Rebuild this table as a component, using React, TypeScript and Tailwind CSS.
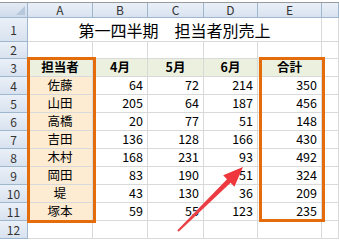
import React from "react";

const rows: [string, number, number, number, number][] = [
  ["佐藤", 64, 72, 214, 350],
  ["山田", 205, 64, 187, 456],
  ["高橋", 20, 77, 51, 148],
  ["吉田", 136, 128, 166, 430],
  ["木村", 168, 231, 93, 492],
  ["岡田", 83, 190, 51, 324],
  ["堤", 43, 130, 36, 209],
  ["塚本", 59, 55, 123, 235],
];

const font = { fontFamily: '"Noto Sans CJK JP", "Liberation Sans", sans-serif' };

const hdr =
  "flex items-center justify-center border-r border-b border-[#9eb6ce] bg-gradient-to-b from-[#eaf0f8] to-[#d8e2ef] text-[12px] text-[#333] leading-none";
const cell = "border-r border-b border-[#d9d9d9] flex items-center text-[12.5px] text-black leading-none";

export default function App() {
  return (
    <div className="w-[339px] h-[240px] overflow-hidden bg-white relative" style={font}>
      <div className="h-[3px] border-b border-[#9a9a9a] bg-white" />
      <div className="grid grid-cols-[28px_65px_55px_56px_54px_64px_17px] grid-rows-[15px_24px_17px_18px_18px_18px_18px_18px_18px_18px_18px_18px_18px]">
        {/* header row */}
        <div className="relative border-r border-b border-[#9eb6ce] bg-gradient-to-b from-[#e4ebf5] to-[#cfdaea]">
          <div className="absolute right-[2px] bottom-[2px] w-0 h-0 border-l-[9px] border-l-transparent border-b-[9px] border-b-[#b8c8dc]" />
        </div>
        {["A", "B", "C", "D", "E", ""].map((c, i) => (
          <div key={i} className={hdr}>
            {c}
          </div>
        ))}

        {/* row 1 */}
        <div className={hdr}>1</div>
        <div className="col-span-5 border-r border-b border-[#d9d9d9] flex items-center justify-center text-[16px] leading-none pt-[1px]">
          第一四半期　担当者別売上
        </div>
        <div className={cell} />

        {/* row 2 */}
        <div className={hdr}>2</div>
        {[0, 1, 2, 3, 4, 5].map((i) => (
          <div key={i} className={cell} />
        ))}

        {/* row 3 */}
        <div className={hdr}>3</div>
        {["担当者", "4月", "5月", "6月", "合計"].map((t) => (
          <div key={t} className={`${cell} justify-center font-bold bg-[#ebf1de]`}>
            {t}
          </div>
        ))}
        <div className={cell} />

        {rows.map((r, idx) => (
          <React.Fragment key={r[0]}>
            <div className={hdr}>{idx + 4}</div>
            <div className={`${cell} justify-center bg-[#fdebd2]`}>{r[0]}</div>
            {[r[1], r[2], r[3], r[4]].map((n, j) => (
              <div key={j} className={`${cell} justify-end pr-[4px]`}>
                {n}
              </div>
            ))}
            <div className={cell} />
          </React.Fragment>
        ))}

        {/* row 12 */}
        <div className={hdr}>12</div>
        {[0, 1, 2, 3, 4, 5].map((i) => (
          <div key={i} className={cell} />
        ))}
      </div>

      {/* orange boxes */}
      <div className="absolute left-[27px] top-[57px] w-[69px] h-[166px] border-[3px] border-[#e46c0a]" />
      <div className="absolute left-[259px] top-[57px] w-[66px] h-[165px] border-[3px] border-[#e46c0a]" />

      {/* arrow */}
      <svg className="absolute left-0 top-0" width="339" height="240" viewBox="0 0 339 240">
        <defs>
          <linearGradient id="ag" x1="0" y1="1" x2="1" y2="0">
            <stop offset="0" stopColor="#e8454a" />
            <stop offset="1" stopColor="#f0343b" />
          </linearGradient>
        </defs>
        <polygon
          points="178.7,231.7 230.6,182.8 234.4,186.7 243,167 223.2,175.3 227,179.2 177.3,230.3"
          fill="url(#ag)"
        />
      </svg>
    </div>
  );
}
